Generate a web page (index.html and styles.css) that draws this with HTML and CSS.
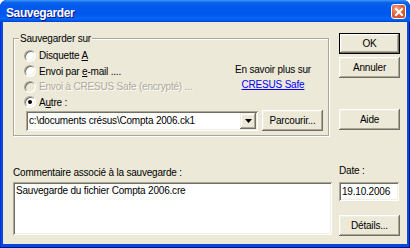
FILE: index.html
```html
<!DOCTYPE html>
<html lang="fr">
<head>
    <meta charset="UTF-8">
    <title>Sauvegarder</title>
    <link rel="stylesheet" href="styles.css">
</head>
<body>

    <div class="window">

        <div class="titlebar">
            <span class="title">Sauvegarder</span>
            <span class="close">
                <svg width="10" height="10" viewBox="0 0 10 10">
                    <path d="M2 2 L8 8 M8 2 L2 8" stroke="#fff" stroke-width="2" stroke-linecap="square"/>
                </svg>
            </span>
        </div>

        <div class="client">

            <div class="group">
                <span class="group-title">Sauvegarder sur</span>

                <div class="group-top">
                    <div class="radios">
                        <div class="radio"><span class="circle"></span><span>Disquette <u>A</u></span></div>
                        <div class="radio"><span class="circle"></span><span>Envoi par <u>e</u>-mail ....</span></div>
                        <div class="radio disabled"><span class="circle"></span><span>Envoi à CRESUS Safe (encrypté) ...</span></div>
                        <div class="radio"><span class="circle checked"></span><span>A<u>u</u>tre :</span></div>
                    </div>
                    <div class="info">
                        En savoir plus sur<br>
                        <a href="#">CRESUS Safe</a>
                    </div>
                </div>

                <div class="file-row">
                    <div class="field combo">
                        <span class="combo-text">c:\documents crésus\Compta 2006.ck1</span>
                        <span class="combo-btn">
                            <svg width="7" height="4" viewBox="0 0 7 4"><polygon points="0,0 7,0 3.5,4" fill="#000"/></svg>
                        </span>
                    </div>
                    <div class="btn">Parcourir...</div>
                </div>
            </div>

            <div class="side-top">
                <div class="btn default">OK</div>
                <div class="btn">Annuler</div>
                <div class="btn btn-aide">Aide</div>
            </div>

            <div class="comment">
                <div class="label comment-label">Commentaire associé à la sauvegarde :</div>
                <div class="field textarea">Sauvegarde du fichier Compta 2006.cre</div>
            </div>

            <div class="side-bottom">
                <div class="label date-label">Date :</div>
                <div class="field date">19.10.2006</div>
                <div class="btn btn-details">Détails...</div>
            </div>

        </div>

    </div>

</body>
</html>
```

FILE: styles.css
```css
body {
    margin: 0;
    font-family: "Liberation Sans", Arial, sans-serif;
    font-size: 10px;
    letter-spacing: -0.2px;
    color: #000;
    background: #fff;
}

.window {
    width: 410px;
    height: 248px;
    display: flex;
    flex-direction: column;
    background: #0848dc;
    border-radius: 7px 7px 0 0;
    box-shadow: inset -1px -1px #00138c, inset 1px 0 #0831d9;
    overflow: hidden;
}

/* barre de titre */
.titlebar {
    height: 22px;
    flex: none;
    display: flex;
    justify-content: space-between;
    align-items: flex-start;
    background: linear-gradient(180deg, #3d95ff 0%, #0a62e8 12%, #0058ee 35%, #0057ec 65%, #0866f6 85%, #0054e6 95%, #003dd7 100%);
}
.title {
    color: #fff;
    font-weight: bold;
    font-size: 12px;
    letter-spacing: -0.4px;
    line-height: 14px;
    padding: 6px 0 0 6px;
    text-shadow: 1px 1px #0f1089;
}
.close {
    width: 15px;
    height: 15px;
    margin: 4px 4px 0 0;
    box-sizing: border-box;
    border: 1px solid #fff;
    border-radius: 3px;
    background: radial-gradient(circle at 35% 30%, #f3a68a 0%, #e2643c 45%, #c8401c 100%);
    display: flex;
    align-items: center;
    justify-content: center;
}

/* zone client */
.client {
    flex: 1;
    margin: 0 3px 4px 3px;
    background: #ece9d8;
    display: grid;
    grid-template-columns: 319px 61px;
    grid-template-rows: auto 1fr;
    column-gap: 7px;
    padding: 11px 0 0 10px;
}

.group {
    position: relative;
    width: 316px;
    height: 98px;
    box-sizing: border-box;
    margin-top: 5px;
    border: 1px solid #aca899;
    box-shadow: inset 1px 1px #fff, 1px 1px #fff;
    padding: 9px 0 0 10px;
}
.group-title {
    position: absolute;
    top: -7px;
    left: 5px;
    padding: 0 1px;
    line-height: 13px;
    background: #ece9d8;
}

.group-top {
    display: flex;
}
.radio {
    height: 15.5px;
    display: flex;
    align-items: center;
    gap: 3px;
    white-space: nowrap;
}
.circle {
    width: 12px;
    height: 12px;
    box-sizing: border-box;
    border-radius: 50%;
    background: #fff;
    border: 1px solid;
    border-color: #aca899 #fff #fff #aca899;
    box-shadow: inset 1px 1px #716f64, inset -1px -1px #f1efe2;
    display: flex;
    align-items: center;
    justify-content: center;
}
.circle.checked::after {
    content: "";
    width: 4px;
    height: 4px;
    border-radius: 50%;
    background: #000;
}
.radio.disabled {
    color: #aca899;
    text-shadow: 1px 1px #fff;
}
.radio.disabled .circle {
    background: #ece9d8;
}

.info {
    margin-left: auto;
    margin-right: 2px;
    width: 106px;
    padding-top: 14px;
    text-align: center;
    line-height: 15px;
}
.info a {
    color: #0000ff;
    text-decoration: underline;
}

.file-row {
    display: flex;
    align-items: center;
    gap: 4px;
    margin-left: 2px;
}

/* champs creux */
.field {
    box-sizing: border-box;
    background: #fff;
    box-shadow: inset 1px 1px #aca899, inset -1px -1px #fff, inset 2px 2px #716f64, inset -2px -2px #f1efe2;
}
.combo {
    width: 232px;
    height: 20px;
    padding: 2px;
    display: flex;
    align-items: center;
}
.combo-text {
    flex: 1;
    padding-left: 1px;
    white-space: nowrap;
}
.combo-btn {
    width: 16px;
    height: 16px;
    box-sizing: border-box;
    background: #ece9d8;
    box-shadow: inset -1px -1px #716f64, inset 1px 1px #f1efe2, inset -2px -2px #aca899, inset 2px 2px #fff;
    display: flex;
    align-items: center;
    justify-content: center;
}

/* boutons */
.btn {
    width: 61px;
    height: 21px;
    box-sizing: border-box;
    background: #ece9d8;
    box-shadow: inset -1px -1px #716f64, inset 1px 1px #fff, inset -2px -2px #aca899, inset 2px 2px #f1efe2;
    display: flex;
    align-items: center;
    justify-content: center;
    flex: none;
}
.btn.default {
    border: 1px solid #000;
}

.side-top {
    display: flex;
    flex-direction: column;
    gap: 3px;
}
.btn-aide {
    margin-top: 28px;
}

.label {
    line-height: 14px;
}
.comment-label {
    margin-top: 30px;
}
.textarea {
    margin-top: 2px;
    width: 319px;
    height: 53px;
    padding: 2px 3px;
    line-height: 14px;
}

.date-label {
    margin-top: 28px;
}
.date {
    margin-top: 4px;
    width: 60px;
    height: 19px;
    padding: 2px 3px;
    line-height: 15px;
}
.btn-details {
    margin-top: 14px;
}
```
